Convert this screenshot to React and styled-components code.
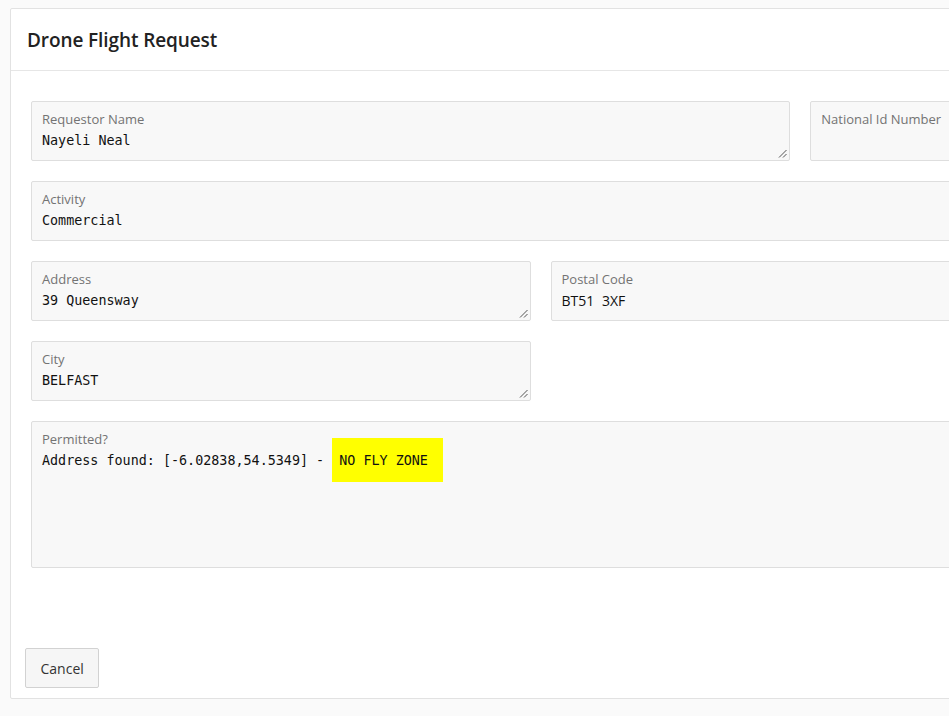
import React from 'react'
import styled, {createGlobalStyle} from 'styled-components'

const GlobalStyle = createGlobalStyle`
    html, body {
        margin: 0;
        padding: 0;
        background: #fafafa;
        overflow: hidden;
        font-family: "Open Sans", "Noto Sans", Arial, sans-serif;
    }
`

const Page = styled.div`
    padding: 8px 0 0 10px;
    height: 716px;
    box-sizing: border-box;
`

const Card = styled.section`
    width: 1059px;
    background: #fff;
    border: 1px solid #e2e2e2;
    border-radius: 2px;
`

const CardHeader = styled.header`
    height: 62px;
    display: flex;
    align-items: center;
    padding: 0 16px;
    border-bottom: 1px solid #e6e6e6;
    box-sizing: border-box;
`

const Title = styled.h1`
    margin: 0;
    font-size: 19px;
    font-weight: 600;
    color: #222;
    letter-spacing: -0.1px;
`

const CardBody = styled.div`
    padding: 30px 20px 80px;
`

const FormGrid = styled.div`
    display: grid;
    grid-template-columns: repeat(12, 1fr);
    column-gap: 20px;
    row-gap: 20px;
`

const Field = styled.div`
    position: relative;
    grid-column: span ${p => p.$span};
    height: ${p => p.$height || 60}px;
    box-sizing: border-box;
    padding: 8px 10px;
    background: #f8f8f8;
    border: 1px solid #dedede;
    border-radius: 2px;
`

const Label = styled.div`
    font-size: 13px;
    line-height: 18px;
    color: #737373;
`

const Value = styled.div`
    margin-top: 3px;
    line-height: 20px;
    font-size: ${p => (p.$sans ? '14px' : '13.4px')};
    font-family: ${p => (p.$sans ? '"Open Sans", "Noto Sans", sans-serif' : '"DejaVu Sans Mono", "Liberation Mono", monospace')};
    word-spacing: ${p => (p.$sans ? '4px' : '0')};
    color: #111;
    white-space: pre;
`

const Highlight = styled.span`
    background: #ffff00;
    padding: 15px 7px 14px;
`

const Grip = styled.svg`
    position: absolute;
    right: 2px;
    bottom: 2px;
    width: 9px;
    height: 9px;
`

const CardFooter = styled.footer`
    padding: 0 14px 10px;
`

const Button = styled.button`
    height: 40px;
    padding: 0 14.5px;
    font-family: "Open Sans", "Noto Sans", Arial, sans-serif;
    font-size: 14px;
    color: #333;
    background: #f6f6f6;
    border: 1px solid #d2d2d2;
    border-radius: 2px;
`

const ResizeGrip = () =>
    <Grip viewBox="0 0 9 9">
        <path d="M8.5 1 L1 8.5 M8.5 5 L5 8.5" stroke="#555" strokeWidth="1" fill="none" />
    </Grip>

const App = () =>
    <Page>
        <GlobalStyle />
        <Card>
            <CardHeader>
                <Title>Drone Flight Request</Title>
            </CardHeader>
            <CardBody>
                <FormGrid>
                    <Field $span={9}>
                        <Label>Requestor Name</Label>
                        <Value>Nayeli Neal</Value>
                        <ResizeGrip />
                    </Field>
                    <Field $span={3}>
                        <Label>National Id Number</Label>
                    </Field>
                    <Field $span={12}>
                        <Label>Activity</Label>
                        <Value>Commercial</Value>
                    </Field>
                    <Field $span={6}>
                        <Label>Address</Label>
                        <Value>39 Queensway</Value>
                        <ResizeGrip />
                    </Field>
                    <Field $span={6}>
                        <Label>Postal Code</Label>
                        <Value $sans>BT51 3XF</Value>
                    </Field>
                    <Field $span={6}>
                        <Label>City</Label>
                        <Value>BELFAST</Value>
                        <ResizeGrip />
                    </Field>
                    <Field $span={12} $height={147}>
                        <Label>Permitted?</Label>
                        <Value>Address found: [-6.02838,54.5349] - <Highlight>NO FLY ZONE </Highlight></Value>
                    </Field>
                </FormGrid>
            </CardBody>
            <CardFooter>
                <Button>Cancel</Button>
            </CardFooter>
        </Card>
    </Page>

export default App
